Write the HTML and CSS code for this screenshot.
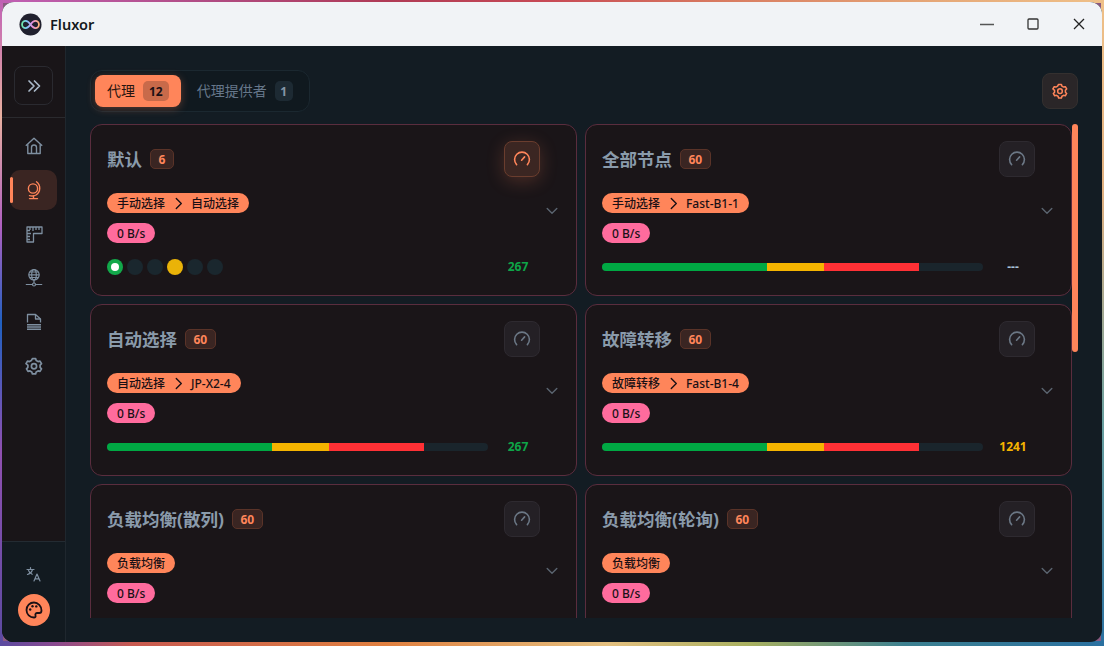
FILE: index.html
```html
<!DOCTYPE html>
<html lang="zh">
<head>
<meta charset="utf-8">
<title>Fluxor</title>
<link rel="stylesheet" href="styles.css">
</head>
<body>
<svg class="defs" width="0" height="0" aria-hidden="true">
  <defs>
    <linearGradient id="inf" x1="0" y1="0" x2="1" y2="0">
      <stop offset="0" stop-color="#6ee7a8"/><stop offset=".3" stop-color="#7cc6ff"/><stop offset=".6" stop-color="#e58ce0"/><stop offset="1" stop-color="#ffb27a"/>
    </linearGradient>
    <symbol id="gauge" viewBox="0 0 18 18"><path d="M3.6 14.6A7.4 7.4 0 1 1 14.4 14.6" fill="none" stroke="currentColor" stroke-width="1.6" stroke-linecap="round"/><path d="M8.6 10.2 11.6 6.9" fill="none" stroke="currentColor" stroke-width="1.6" stroke-linecap="round"/></symbol>
    <symbol id="down" viewBox="0 0 12 8"><path d="M1.2 1.6 6 6.2 10.8 1.6" fill="none" stroke="currentColor" stroke-width="1.4" stroke-linecap="round" stroke-linejoin="round"/></symbol>
    <symbol id="right" viewBox="0 0 14 14"><path d="M4.6 1.6 10 7 4.6 12.4" fill="none" stroke="currentColor" stroke-width="1.5" stroke-linecap="round" stroke-linejoin="round"/></symbol>
    <symbol id="cog" viewBox="0 0 18 18"><path d="M7.4 1.6h3.2l.6 2 1.8 1 2-.5 1.500 2.600-1.400 1.500v2.100l1.400 1.500-1.500 2.600-2-.5-1.800 1-.6 2H7.400l-.6-2-1.800-1-2 .5-1.500-2.600 1.400-1.500V8.200L1 6.700l1.500-2.600 2 .5 1.800-1z" fill="none" stroke="currentColor" stroke-width="1.700" stroke-linejoin="round"/><circle cx="9" cy="9.200" r="2.600" fill="none" stroke="currentColor" stroke-width="1.700"/></symbol>
  </defs>
</svg>
<div class="window">
  <header class="titlebar">
    <svg class="logo" viewBox="0 0 24 24"><circle cx="12" cy="12" r="11.500" fill="#20202e"/><path d="M12 12c-1.700-2.400-3.200-3.700-5.100-3.700a3.700 3.700 0 0 0 0 7.400c1.900 0 3.400-1.300 5.100-3.700s3.200-3.700 5.100-3.700a3.700 3.700 0 0 1 0 7.400c-1.900 0-3.400-1.300-5.100-3.700z" fill="none" stroke="url(#inf)" stroke-width="1.900"/></svg>
    <span class="app-name">Fluxor</span>
    <div class="controls">
      <svg class="ctl" viewBox="0 0 14 14"><path d="M0 7.500h14" stroke="#555" stroke-width="1.300"/></svg>
      <svg class="ctl" viewBox="0 0 14 14"><rect x="2" y="2" width="10" height="10" rx="1" fill="none" stroke="#333" stroke-width="1.300"/></svg>
      <svg class="ctl" viewBox="0 0 14 14"><path d="M2 2l10 10M12 2 2 12" stroke="#222" stroke-width="1.300"/></svg>
    </div>
  </header>
  <div class="body">
    <aside class="sidebar">
      <div class="side-top">
        <button class="toggle"><svg class="i16" viewBox="0 0 16 16"><path d="M3 3l5 5-5 5M8.500 3l5 5-5 5" fill="none" stroke="#a9b8c8" stroke-width="1.700" stroke-linecap="round" stroke-linejoin="round"/></svg></button>
      </div>
      <nav class="nav">
        <a class="nav-item"><svg class="i20" viewBox="0 0 20 20" fill="none" stroke="currentColor" stroke-width="1.400" stroke-linejoin="round"><path d="M1.800 9.800 10 2.200l8.200 7.600"/><path d="M3.800 8.200V17.500h12.400V8.200"/><path d="M7.500 17.500V11.500a2.500 2.500 0 0 1 5 0V17.500"/></svg></a>
        <a class="nav-item active"><svg class="i20" viewBox="0 0 20 20" fill="none" stroke="currentColor" stroke-width="1.400" stroke-linecap="round"><circle cx="9" cy="8.500" r="4.600"/><path d="M12.500 1.800a8 8 0 0 1-.5 13.200 8 8 0 0 1-6.500.6"/><path d="M9.500 16v2.600M5.500 18.600h8"/></svg></a>
        <a class="nav-item"><svg class="i20" viewBox="0 0 20 20" fill="none" stroke="currentColor" stroke-width="1.300" stroke-linejoin="round"><path d="M3 3h15v6.500H9.500V18H3z"/><path d="M6 3v3M9 3v4M12 3v3M15 3v3M3 6.500h3M3 9.500h4M3 12.500h3M3 15.500h3"/></svg></a>
        <a class="nav-item"><svg class="i20" viewBox="0 0 20 20" fill="none" stroke="currentColor" stroke-width="1.200"><circle cx="10" cy="6.800" r="5.200"/><ellipse cx="10" cy="6.800" rx="2.300" ry="5.200"/><path d="M4.800 6.800h10.400M5.600 4h8.800M5.600 9.500h8.800M10 12v3"/><circle cx="10" cy="16.500" r="1.500"/><path d="M1.800 16.500h6.700M11.500 16.500h6.700"/></svg></a>
        <a class="nav-item"><svg class="i20" viewBox="0 0 20 20" fill="none" stroke="currentColor" stroke-width="1.300" stroke-linejoin="round"><path d="M3.500 10.500V2.500H11.500L16.500 7V10.500"/><path d="M11.500 2.500V7H16.500"/><path d="M3 12.700h14M3 15h14M3 17.300h14" stroke-width="1.400"/></svg></a>
        <a class="nav-item"><svg class="gear-nav" viewBox="0 0 18 18"><use href="#cog"/></svg></a>
      </nav>
      <div class="side-foot">
        <svg class="i16 lang" viewBox="0 0 16 16" fill="none" stroke="currentColor" stroke-width="1.200" stroke-linecap="round" stroke-linejoin="round"><path d="M1 3.500h7M4.500 1.500v2M6.500 3.500C6 5.500 4 7.500 1.500 8.500M2.500 4.500c.6 1.600 2 3 3.700 3.800"/><path d="M8 15l3-7 3 7M9 12.800h4"/></svg>
        <button class="palette"><svg class="i20" viewBox="0 0 20 20" fill="none" stroke="#1a1015" stroke-width="1.800"><path d="M10 2.500a7.500 7.500 0 0 0 0 15c1.300 0 1.900-.9 1.500-2-.5-1.300.3-2.500 1.700-2.500h2c1.300 0 2.300-1 2.300-2.600 0-4.500-3.500-7.900-7.500-7.900z"/><circle cx="6.200" cy="9.500" r="1.200" fill="#1a1015" stroke="none"/><circle cx="8.500" cy="6.200" r="1.200" fill="#1a1015" stroke="none"/><circle cx="12.300" cy="6.400" r="1.200" fill="#1a1015" stroke="none"/></svg></button>
      </div>
    </aside>
    <main class="main">
      <div class="head">
        <div class="tabs">
          <div class="tab on">代理<span class="count">12</span></div>
          <div class="tab">代理提供者<span class="count">1</span></div>
        </div>
        <button class="icon-btn accent"><svg class="i16" viewBox="0 0 18 18"><use href="#cog"/></svg></button>
      </div>
      <div class="scroller">
        <div class="grid">

          <section class="card">
            <div class="card-head"><h2 class="title">默认</h2><span class="badge">6</span><button class="icon-btn hot"><svg class="i18" viewBox="0 0 18 18"><use href="#gauge"/></svg></button></div>
            <div class="card-mid">
              <div class="pills">
                <span class="pill tag">手动选择<svg class="sep" viewBox="0 0 14 14"><use href="#right"/></svg>自动选择</span>
                <span class="pill speed">0 B/s</span>
              </div>
              <svg class="chev" viewBox="0 0 12 8"><use href="#down"/></svg>
            </div>
            <div class="card-foot">
              <div class="dots"><i class="dot ok"></i><i class="dot"></i><i class="dot"></i><i class="dot warn"></i><i class="dot"></i><i class="dot"></i></div>
              <span class="num green">267</span>
            </div>
          </section>

          <section class="card">
            <div class="card-head"><h2 class="title">全部节点</h2><span class="badge">60</span><button class="icon-btn"><svg class="i18" viewBox="0 0 18 18"><use href="#gauge"/></svg></button></div>
            <div class="card-mid">
              <div class="pills">
                <span class="pill tag">手动选择<svg class="sep" viewBox="0 0 14 14"><use href="#right"/></svg>Fast-B1-1</span>
                <span class="pill speed">0 B/s</span>
              </div>
              <svg class="chev" viewBox="0 0 12 8"><use href="#down"/></svg>
            </div>
            <div class="card-foot">
              <div class="bar"><i class="s1"></i><i class="s2"></i><i class="s3"></i></div>
              <span class="num pale">---</span>
            </div>
          </section>

          <section class="card">
            <div class="card-head"><h2 class="title">自动选择</h2><span class="badge">60</span><button class="icon-btn"><svg class="i18" viewBox="0 0 18 18"><use href="#gauge"/></svg></button></div>
            <div class="card-mid">
              <div class="pills">
                <span class="pill tag">自动选择<svg class="sep" viewBox="0 0 14 14"><use href="#right"/></svg>JP-X2-4</span>
                <span class="pill speed">0 B/s</span>
              </div>
              <svg class="chev" viewBox="0 0 12 8"><use href="#down"/></svg>
            </div>
            <div class="card-foot">
              <div class="bar"><i class="s1"></i><i class="s2"></i><i class="s3"></i></div>
              <span class="num green">267</span>
            </div>
          </section>

          <section class="card">
            <div class="card-head"><h2 class="title">故障转移</h2><span class="badge">60</span><button class="icon-btn"><svg class="i18" viewBox="0 0 18 18"><use href="#gauge"/></svg></button></div>
            <div class="card-mid">
              <div class="pills">
                <span class="pill tag">故障转移<svg class="sep" viewBox="0 0 14 14"><use href="#right"/></svg>Fast-B1-4</span>
                <span class="pill speed">0 B/s</span>
              </div>
              <svg class="chev" viewBox="0 0 12 8"><use href="#down"/></svg>
            </div>
            <div class="card-foot">
              <div class="bar"><i class="s1"></i><i class="s2"></i><i class="s3"></i></div>
              <span class="num amber">1241</span>
            </div>
          </section>

          <section class="card">
            <div class="card-head"><h2 class="title">负载均衡(散列)</h2><span class="badge">60</span><button class="icon-btn"><svg class="i18" viewBox="0 0 18 18"><use href="#gauge"/></svg></button></div>
            <div class="card-mid">
              <div class="pills">
                <span class="pill tag">负载均衡</span>
                <span class="pill speed">0 B/s</span>
              </div>
              <svg class="chev" viewBox="0 0 12 8"><use href="#down"/></svg>
            </div>
          </section>

          <section class="card">
            <div class="card-head"><h2 class="title">负载均衡(轮询)</h2><span class="badge">60</span><button class="icon-btn"><svg class="i18" viewBox="0 0 18 18"><use href="#gauge"/></svg></button></div>
            <div class="card-mid">
              <div class="pills">
                <span class="pill tag">负载均衡</span>
                <span class="pill speed">0 B/s</span>
              </div>
              <svg class="chev" viewBox="0 0 12 8"><use href="#down"/></svg>
            </div>
          </section>

        </div>
        <div class="track"><div class="thumb"></div></div>
      </div>
    </main>
  </div>
</div>
</body>
</html>
```

FILE: styles.css
```css
* { box-sizing: border-box; }
html, body { height: 100%; }
body {
  margin: 0;
  padding: 2px 2px 4px 2px;
  overflow: hidden;
  font-family: "Noto Sans", "Noto Sans CJK SC", sans-serif;
  background-color: #8a5a80;
  background-image:
    linear-gradient(90deg, #c060b4 0%, #b04a80 20%, #b03a55 35%, #c84a55 50%, #d87a60 65%, #e6a878 85%, #efc088 100%),
    linear-gradient(90deg, #5a4aa0 0%, #8a4a90 5%, #c85a50 12%, #e08040 35%, #e4c080 55%, #a8b060 68%, #3c8090 82%, #2a70a0 100%),
    linear-gradient(180deg, #c060b4 0%, #e8b0a0 18%, #b060c0 35%, #2060c0 50%, #9050b0 70%, #5a4aa0 100%),
    linear-gradient(180deg, #efc088 0%, #e0b080 30%, #6aa0a0 65%, #2a70a0 100%);
  background-repeat: no-repeat;
  background-size: 100% 3px, 100% 5px, 3px 100%, 3px 100%;
  background-position: top left, bottom left, top left, top right;
}
.defs { position: absolute; }
button { border: 0; padding: 0; background: none; font: inherit; }

.window {
  height: 640px;
  border-radius: 12px;
  overflow: hidden;
  display: flex;
  flex-direction: column;
  background: #131c23;
}

.titlebar {
  height: 44px;
  flex: none;
  display: flex;
  align-items: center;
  padding-left: 17px;
  background: #f1f3f6;
}
.logo { width: 23px; height: 23px; flex: none; }
.app-name { margin-left: 8px; font-size: 14.500px; font-weight: 600; color: #14181c; }
.controls { margin-left: auto; display: flex; }
.ctl { width: 14px; height: 14px; margin-right: 32px; }
.controls .ctl:last-child { margin-right: 16px; }

.body { flex: 1; min-height: 0; display: flex; }

.sidebar {
  width: 64px;
  flex: none;
  display: flex;
  flex-direction: column;
  background: #191518;
  border-right: 1px solid #1f272e;
}
.side-top { padding: 20px 12px 12px; border-bottom: 1px solid #2a2a2e; }
.toggle {
  display: flex;
  align-items: center;
  justify-content: center;
  width: 39px;
  height: 39px;
  border: 1px solid #2a2a30;
  border-radius: 8px;
  background: #191518;
}
.i16 { width: 16px; height: 16px; display: block; }
.i18 { width: 18px; height: 18px; display: block; }
.i20 { width: 20px; height: 20px; display: block; }
.gear-nav { width: 18px; height: 18px; display: block; }

.nav { padding: 8px; display: flex; flex-direction: column; gap: 4px; }
.nav-item {
  position: relative;
  height: 40px;
  display: flex;
  align-items: center;
  justify-content: center;
  border-radius: 10px;
  color: #7e8fa0;
}
.nav-item.active { background: #3a2522; color: #ff855a; }
.nav-item.active::before {
  content: "";
  position: absolute;
  left: 0;
  top: 7px;
  bottom: 7px;
  width: 3px;
  border-radius: 2px;
  background: #ff855a;
}

.side-foot {
  margin-top: auto;
  height: 101px;
  padding-bottom: 16px;
  display: flex;
  flex-direction: column;
  align-items: center;
  justify-content: flex-end;
  gap: 12px;
  background: #121a20;
  border-top: 1px solid #232b32;
}
.lang { color: #7e8fa0; }
.palette {
  width: 32px;
  height: 32px;
  border-radius: 50%;
  background: #ff855a;
  display: flex;
  align-items: center;
  justify-content: center;
}

.main {
  flex: 1;
  min-width: 0;
  padding: 24px;
  display: flex;
  flex-direction: column;
  gap: 12px;
  overflow: hidden;
}
.head { display: flex; align-items: center; justify-content: space-between; flex: none; }
.tabs {
  height: 42px;
  display: flex;
  align-items: center;
  gap: 4px;
  padding: 0 4px;
  border: 1px solid #1b2830;
  border-radius: 12px;
  background: #10191f;
}
.tab {
  height: 32px;
  padding: 0 12px 2px;
  display: flex;
  align-items: center;
  gap: 8px;
  border-radius: 8px;
  font-size: 14px;
  color: #66778a;
}
.tab.on { background: #ff855a; color: #2a1510; box-shadow: 0 2px 8px rgba(255,133,90,.3); }
.count {
  min-width: 18px;
  height: 20px;
  margin-top: 2px;
  padding: 0 5px;
  display: flex;
  align-items: center;
  justify-content: center;
  border-radius: 5px;
  background: #1d2a33;
  color: #8496a8;
  font-size: 12px;
  font-weight: 700;
}
.tab.on .count { background: #c86a4a; color: #1a1015; padding: 0 6px; }

.icon-btn {
  width: 36px;
  height: 36px;
  flex: none;
  display: flex;
  align-items: center;
  justify-content: center;
  border: 1px solid #2e2a30;
  border-radius: 8px;
  background: #242025;
  color: #6b7785;
}
.icon-btn.accent { color: #ff855a; background: #2a2628; border-color: #34302f; }
.icon-btn.hot {
  color: #ff855a;
  background: #3b2622;
  border-color: #6a3d2e;
  box-shadow: 0 4px 18px rgba(255,133,90,.22);
}

.scroller { flex: 1; min-height: 0; display: flex; overflow: hidden; }
.grid {
  width: 982px;
  flex: none;
  display: grid;
  grid-template-columns: 487px 487px;
  grid-auto-rows: 172px;
  gap: 8px;
}
.track { width: 6px; flex: none; }
.thumb { width: 6px; height: 228px; border-radius: 3px; background: #ff855a; }

.card {
  padding: 16px 0 20px 16px;
  border: 1px solid #5a2d3e;
  border-radius: 12px;
  background: #1a1518;
  display: flex;
  flex-direction: column;
}
.card-head { display: flex; align-items: center; height: 36px; padding-right: 36px; }
.title { margin: 0; font-size: 17.500px; line-height: 24px; font-weight: 700; color: #8a9bab; white-space: nowrap; }
.badge {
  margin-left: 8px;
  height: 20px;
  min-width: 24px;
  padding: 0 7.500px;
  display: flex;
  align-items: center;
  justify-content: center;
  border: 1px solid #5a3328;
  border-radius: 5px;
  background: #3a2522;
  color: #ff855a;
  font-size: 12px;
  font-weight: 700;
}
.card-head .icon-btn { margin-left: auto; }

.card-mid { margin-top: 16px; display: flex; justify-content: space-between; padding-right: 18px; }
.pills { display: flex; flex-direction: column; align-items: flex-start; gap: 10px; }
.pill {
  height: 20px;
  padding: 0 10px;
  display: flex;
  align-items: center;
  border-radius: 10px;
  font-size: 12px;
  font-weight: 500;
  color: #1a1015;
  white-space: nowrap;
}
.tag { background: #ff855a; }
.speed { background: #ff6b9d; }
.sep { width: 13px; height: 13px; margin: 0 6.500px; }
.chev { width: 12px; height: 8px; margin-top: 14px; color: #5b6570; }

.card-foot { margin-top: 16px; height: 16px; display: flex; align-items: center; padding-right: 12px; }
.dots { width: 381px; flex: none; display: flex; gap: 4px; }
.dot { width: 16px; height: 16px; border-radius: 50%; background: #1a272e; display: flex; align-items: center; justify-content: center; }
.dot.ok { background: #12a84a; }
.dot.ok::after { content: ""; width: 8px; height: 8px; border-radius: 50%; background: #fff; }
.dot.warn { background: #eab308; }
.bar { width: 381px; flex: none; height: 8px; display: flex; border-radius: 4px; overflow: hidden; background: #1a252c; }
.bar i { display: block; height: 100%; }
.s1 { width: 165px; background: #00a843; }
.s2 { width: 57px; background: #f5b400; }
.s3 { width: 95px; background: #ff3035; }
.num { width: 60px; flex: none; text-align: center; font-size: 12px; line-height: 16px; font-weight: 700; }
.green { color: #0ea548; }
.amber { color: #f5b400; }
.pale { color: #a9c0d8; }
```
